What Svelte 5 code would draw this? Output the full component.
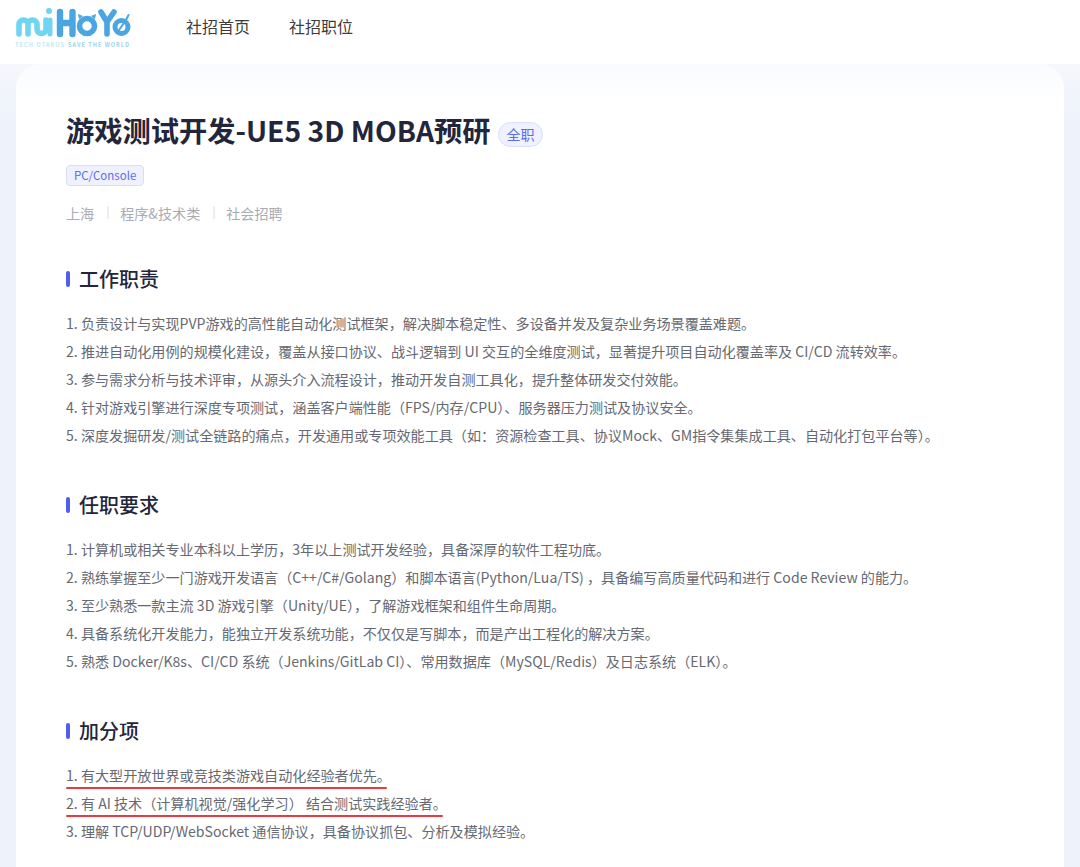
<script>
  const sections = [
    {
      title: '工作职责',
      items: [
        '负责设计与实现PVP游戏的高性能自动化测试框架，解决脚本稳定性、多设备并发及复杂业务场景覆盖难题。',
        '推进自动化用例的规模化建设，覆盖从接口协议、战斗逻辑到 UI 交互的全维度测试，显著提升项目自动化覆盖率及 CI/CD 流转效率。',
        '参与需求分析与技术评审，从源头介入流程设计，推动开发自测工具化，提升整体研发交付效能。',
        '针对游戏引擎进行深度专项测试，涵盖客户端性能（FPS/内存/CPU）、服务器压力测试及协议安全。',
        '深度发掘研发/测试全链路的痛点，开发通用或专项效能工具（如：资源检查工具、协议Mock、GM指令集集成工具、自动化打包平台等）。'
      ]
    },
    {
      title: '任职要求',
      items: [
        '计算机或相关专业本科以上学历，3年以上测试开发经验，具备深厚的软件工程功底。',
        '熟练掌握至少一门游戏开发语言（C++/C#/Golang）和脚本语言(Python/Lua/TS) ，具备编写高质量代码和进行 Code Review 的能力。',
        '至少熟悉一款主流 3D 游戏引擎（Unity/UE），了解游戏框架和组件生命周期。',
        '具备系统化开发能力，能独立开发系统功能，不仅仅是写脚本，而是产出工程化的解决方案。',
        '熟悉 Docker/K8s、CI/CD 系统（Jenkins/GitLab CI）、常用数据库（MySQL/Redis）及日志系统（ELK）。'
      ]
    },
    {
      title: '加分项',
      items: [
        '有大型开放世界或竞技类游戏自动化经验者优先。',
        '有 AI 技术（计算机视觉/强化学习） 结合测试实践经验者。',
        '理解 TCP/UDP/WebSocket 通信协议，具备协议抓包、分析及模拟经验。'
      ],
      marked: 2
    }
  ];
</script>

<header>
  <svg class="logo" width="116" height="44" viewBox="15 5 116 44" aria-label="miHoYo">
    <g fill="none" stroke-width="5.6" stroke-linecap="round" stroke-linejoin="round">
      <path d="M19 34V24.500a4.500 4.500 0 0 1 9 0V34M28 24.500a4.500 4.500 0 0 1 9 0V29a4.500 4.500 0 0 0 9 0V20" stroke="#70d4f3" />
      <path d="M50 20v14" stroke="#70d4f3" stroke-width="5" />
      <path d="M60 12v22M72.500 12v22M60 23h12.500" stroke="#4aa5e0" stroke-width="6.400" />
      <circle cx="87" cy="26" r="7.500" stroke="#4aa5e0" />
      <path d="M101 12l6 10 7-10M107 22v12" stroke="#4aa5e0" />
      <circle cx="121.500" cy="27" r="6.500" stroke="#4aa5e0" stroke-width="5" />
      <path d="M117 33l9-13 2.500-5" stroke="#4aa5e0" stroke-width="2" />
    </g>
    <circle cx="49" cy="11" r="3" fill="#70d4f3" />
    <path d="M78 14l5 2-4 3zM96 14l-5 2 4 3z" fill="#4aa5e0" />
    <text x="15" y="47" font-size="5.500" font-weight="700" textLength="49" class="tl1">TECH OTAKUS</text>
    <text x="68" y="47" font-size="5.500" font-weight="700" textLength="61" class="tl2">SAVE THE WORLD</text>
  </svg>
  <nav>
    <a href="#home">社招首页</a>
    <a href="#jobs">社招职位</a>
  </nav>
</header>

<main>
  <div class="card">
    <div class="headline">
      <h1>游戏测试开发-UE5 3D MOBA预研</h1>
      <span class="pill">全职</span>
    </div>
    <span class="tag">PC/Console</span>
    <div class="meta">
      <span>上海</span>
      <span>程序&技术类</span>
      <span>社会招聘</span>
    </div>

    {#each sections as s}
      <section>
        <h2>{s.title}</h2>
        <ol>
          {#each s.items as item, i}
            <li class:marked={i < (s.marked ?? 0)}>{i + 1}. {item}</li>
          {/each}
        </ol>
      </section>
    {/each}
  </div>
</main>

<style>
  :global(body) {
    background: #eef2fb;
    font-family: "Noto Sans CJK SC", "Noto Sans", sans-serif;
  }
  header {
    box-sizing: border-box;
    height: 64px;
    background: #fff;
    display: flex;
    align-items: center;
    padding: 0 0 10px 15px;
  }
  .logo {
    display: block;
  }
  .tl1 {
    fill: #c2e8f7;
  }
  .tl2 {
    fill: #9dd3ef;
  }
  nav {
    display: flex;
    gap: 39px;
    margin: 0 0 2px 55px;
  }
  nav a {
    font-size: 16px;
    color: #3d3d3d;
    text-decoration: none;
  }
  main {
    padding: 0 16px;
    height: 803px;
    overflow: hidden;
    background: linear-gradient(#f5f7fc, #eef2fb 60px);
  }
  .card {
    background: linear-gradient(#fafbfe, #fff 40px);
    border-radius: 24px 24px 0 0;
    padding: 46px 50px 0;
    height: 803px;
  }
  .headline {
    display: flex;
    align-items: center;
    gap: 8px;
    height: 40px;
  }
  h1 {
    margin: 0;
    font-size: 28.250px;
    font-weight: 700;
    color: #23263a;
    line-height: 40px;
  }
  .pill {
    font-size: 14.100px;
    color: #5a6cf0;
    background: #eff2fe;
    border: 1px solid #d9e0fb;
    border-radius: 13px;
    padding: 0 7px;
    line-height: 23px;
    margin-top: 9px;
  }
  .tag {
    display: inline-block;
    margin-top: 15px;
    font-size: 11.500px;
    color: #5a6cf0;
    background: #eff2fe;
    border: 1px solid #d6defb;
    border-radius: 4px;
    padding: 0 7px;
    line-height: 19px;
  }
  .meta {
    display: flex;
    margin-top: 13px;
    font-size: 14.100px;
    color: #a9acb5;
    line-height: 28px;
  }
  .meta span + span {
    margin-left: 13px;
    padding-left: 13px;
    position: relative;
  }
  .meta span + span::before {
    content: "";
    position: absolute;
    left: 0;
    top: 7px;
    width: 2px;
    height: 13px;
    background: #eceef2;
  }
  section {
    margin-top: 43.500px;
  }
  section:first-of-type {
    margin-top: 39px;
  }
  h2 {
    margin: 0 0 16.500px;
    font-size: 20px;
    font-weight: 500;
    color: #23263a;
    line-height: 26px;
    padding-left: 13px;
    position: relative;
  }
  h2::before {
    content: "";
    position: absolute;
    left: 0;
    top: 5px;
    width: 4px;
    height: 16px;
    border-radius: 2px;
    background: #4f5df0;
  }
  ol {
    list-style: none;
    margin: 0;
    padding: 0;
  }
  li {
    font-size: 14.100px;
    line-height: 28px;
    color: #666972;
    white-space: nowrap;
    width: fit-content;
    position: relative;
  }
  li.marked::after {
    content: "";
    position: absolute;
    left: 0;
    right: 4px;
    bottom: 0;
    height: 2px;
    border-radius: 1px;
    background: #e93a42;
  }
</style>
